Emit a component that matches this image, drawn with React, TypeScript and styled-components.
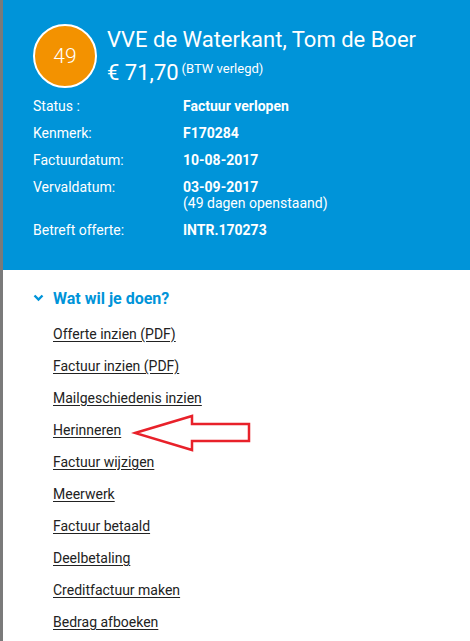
import React from 'react'
import styled, { createGlobalStyle } from 'styled-components'

const GlobalStyle = createGlobalStyle`
  html, body {
    margin: 0;
    padding: 0;
    background: #ffffff;
    font-family: Roboto, "Liberation Sans", sans-serif;
  }
`

const Page = styled.div`
  position: relative;
  min-height: 641px;
  border-left: 3px solid #7a7a7a;
  background: #ffffff;
`

const Header = styled.div`
  background: #0094d9;
  color: #ffffff;
  padding: 24px 0 26px 30px;
  height: 270px;
  box-sizing: border-box;
`

const TopRow = styled.div`
  display: flex;
  align-items: flex-start;
  gap: 10px;
`

const Badge = styled.div`
  width: 60px;
  height: 60px;
  border-radius: 50%;
  border: 2px solid #ffffff;
  background: #f39200;
  display: flex;
  align-items: center;
  justify-content: center;
  font-size: 21px;
  font-weight: 300;
  flex-shrink: 0;
`

const Titles = styled.div`
  display: flex;
  flex-direction: column;
  padding-top: 2px;
`

const Name = styled.div`
  font-size: 22px;
  line-height: 28px;
`

const Amount = styled.div`
  font-size: 22px;
  line-height: 28px;
  margin-top: 1px;

  sup {
    font-size: 13px;
    vertical-align: 7px;
    margin-left: 3px;
  }
`

const Details = styled.div`
  display: grid;
  grid-template-columns: 150px 1fr;
  row-gap: 11px;
  margin-top: 10px;
  font-size: 14px;
  line-height: 16px;
`

const Label = styled.div``

const Value = styled.div<{ $bold?: boolean }>`
  font-weight: ${({ $bold }) => ($bold ? 700 : 400)};
`

const Body = styled.div`
  padding: 19px 0 0 30px;
`

const SectionTitle = styled.div`
  display: flex;
  align-items: center;
  gap: 9px;
  color: #0094d9;
  font-size: 16px;
  font-weight: 700;
  height: 18px;
`

const Actions = styled.ul`
  list-style: none;
  margin: 18px 0 0 20px;
  padding: 0;
  display: flex;
  flex-direction: column;
  gap: 14px;
`

const ActionItem = styled.li`
  display: flex;
  height: 18px;
  line-height: 18px;
`

const ActionLink = styled.a`
  color: #222222;
  font-size: 14px;
  line-height: 18px;
  text-decoration: underline;
  text-underline-offset: 2px;
`

const ArrowOverlay = styled.svg`
  position: absolute;
  left: 128px;
  top: 413px;
`

const rows: { label: string; value: string; extra?: string }[] = [
  { label: 'Status :', value: 'Factuur verlopen' },
  { label: 'Kenmerk:', value: 'F170284' },
  { label: 'Factuurdatum:', value: '10-08-2017' },
  { label: 'Vervaldatum:', value: '03-09-2017', extra: '(49 dagen openstaand)' },
  { label: 'Betreft offerte:', value: 'INTR.170273' },
]

const actions = [
  'Offerte inzien (PDF)',
  'Factuur inzien (PDF)',
  'Mailgeschiedenis inzien',
  'Herinneren',
  'Factuur wijzigen',
  'Meerwerk',
  'Factuur betaald',
  'Deelbetaling',
  'Creditfactuur maken',
  'Bedrag afboeken',
]

const App: React.FC = () => {
  return (
    <Page>
      <GlobalStyle />
      <Header>
        <TopRow>
          <Badge>49</Badge>
          <Titles>
            <Name>VVE de Waterkant, Tom de Boer</Name>
            <Amount>
              € 71,70<sup>(BTW verlegd)</sup>
            </Amount>
          </Titles>
        </TopRow>
        <Details>
          {rows.map((r) => (
            <React.Fragment key={r.label}>
              <Label>{r.label}</Label>
              <Value $bold>
                {r.value}
                {r.extra && <Value>{r.extra}</Value>}
              </Value>
            </React.Fragment>
          ))}
        </Details>
      </Header>
      <Body>
        <SectionTitle>
          <svg width="11" height="8" viewBox="0 0 11 8">
            <path d="M1.5 1.5 L5.5 5.5 L9.5 1.5" fill="none" stroke="#0094d9" strokeWidth="2.4" />
          </svg>
          Wat wil je doen?
        </SectionTitle>
        <Actions>
          {actions.map((a) => (
            <ActionItem key={a}>
              <ActionLink href="#">{a}</ActionLink>
            </ActionItem>
          ))}
        </Actions>
      </Body>
      <ArrowOverlay width="124" height="44" viewBox="0 0 124 44">
        <path
          d="M4 20 L61 3 L61 11 L118 11 L118 28 L61 28 L61 37 Z"
          fill="none"
          stroke="#e8212a"
          strokeWidth="2.5"
          strokeLinejoin="miter"
        />
      </ArrowOverlay>
    </Page>
  )
}

export default App
